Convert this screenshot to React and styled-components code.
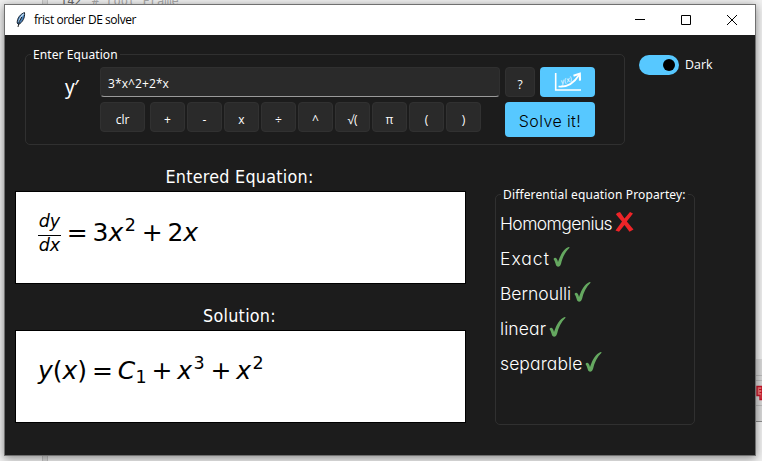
import React from "react";
import styled, { createGlobalStyle } from "styled-components";

const GlobalStyle = createGlobalStyle`
  * { box-sizing: border-box; }
  html, body { margin: 0; padding: 0; overflow: hidden; }
`;

const ui = `"Open Sans", "Noto Sans", sans-serif`;

const Desktop = styled.div`
  position: relative;
  width: 762px;
  height: 461px;
  padding: 4px 6px 5px 4px;
  overflow: hidden;
  background: #f0f0f0;
  font-family: ${ui};
`;

const CodeLine = styled.div`
  position: absolute;
  left: 60px;
  top: -8px;
  font: 12px/18px "DejaVu Sans Mono", monospace;
  color: #a9a9a9;
  white-space: pre;
  span { color: #6a6a6a; margin-right: 3px; }
`;

const Gutter = styled.div`
  position: absolute;
  left: 42px;
  top: 0;
  width: 6px;
  height: 461px;
  background: #dcdcdc;
  border: solid #c4c4c4;
  border-width: 0 1px;
`;

const SidePanel = styled.div`
  position: absolute;
  left: 754px;
  top: 359px;
  width: 8px;
  height: 63px;
  padding-top: 16px;
  background: #d9d9d9;
  border-bottom: 1px solid #8c8c8c;
  svg { display: block; }
`;

const Window = styled.div`
  position: relative;
  display: flex;
  flex-direction: column;
  width: 752px;
  height: 452px;
  border: 1px solid #707070;
  background: #1c1c1c;
  box-shadow: 0 2px 9px rgba(0, 0, 0, 0.45);
`;

const TitleBar = styled.header`
  display: flex;
  align-items: center;
  height: 30px;
  padding-left: 10px;
  background: #fff;
  color: #000;
`;

const Title = styled.h1`
  flex: 1;
  margin: 0 0 0 7px;
  font-size: 12px;
  font-weight: 400;
  line-height: 16px;
  letter-spacing: -0.45px;
`;

const WindowButton = styled.span`
  display: flex;
  align-items: center;
  justify-content: center;
  width: 46px;
  height: 28px;
`;

const Content = styled.main`
  flex: 1;
  padding: 19px 0 0 10px;
`;

const TopRow = styled.div`
  display: flex;
  align-items: flex-start;
  gap: 14px;
  padding-left: 10px;
`;

const Group = styled.section`
  position: relative;
  width: ${(p) => p.$w}px;
  height: ${(p) => p.$h}px;
  border: 1px solid #303030;
  border-radius: 5px;
`;

const Legend = styled.div`
  position: absolute;
  left: 5px;
  top: -9px;
  padding: 0 2px;
  background: #1c1c1c;
  color: #fff;
  font: 12px/18px "Noto Sans", sans-serif;
  letter-spacing: ${(p) => p.$ls || 0}px;
  white-space: nowrap;
`;

const EquationForm = styled.div`
  display: grid;
  grid-template-columns: 74px 400px 95px;
  grid-template-rows: 30px 35px;
  row-gap: 5px;
  padding-top: 12px;
`;

const Prime = styled.label`
  padding: 5px 0 0 39px;
  color: #fff;
  font: 19px/30px "Noto Sans", sans-serif;
  letter-spacing: -0.5px;
`;

const Input = styled.div`
  height: 30px;
  padding-left: 7px;
  background: #2a2a2a;
  border: 1px solid #303030;
  border-bottom-color: #9a9a9a;
  border-radius: 4px;
  color: #fff;
  font: 12px/32px ${ui};
  letter-spacing: 0.1px;
`;

const Actions = styled.div`
  display: flex;
  gap: 5px;
  margin-left: 5px;
`;

const Key = styled.button`
  width: ${(p) => p.$w || 35}px;
  height: 30px;
  padding: 6px 0 0;
  background: #2a2a2a;
  border: 1px solid #313131;
  border-radius: 4px;
  color: #fff;
  font: 12px/20px ${ui};
`;

const PlotButton = styled.button`
  display: flex;
  align-items: center;
  justify-content: center;
  width: 55px;
  height: 30px;
  padding: 0;
  border: 0;
  border-radius: 4px;
  background: #57c8ff;
`;

const Keypad = styled.div`
  grid-column: 2;
  display: flex;
  gap: 2px;
  ${Key}:first-child { margin-right: 3px; }
`;

const SolveButton = styled.button`
  width: 90px;
  height: 35px;
  margin-left: 5px;
  padding: 3px 0 0;
  border: 0;
  border-radius: 4px;
  background: #57c8ff;
  color: #000;
  font: 300 16px/24px Inter, sans-serif;
  letter-spacing: 0.4px;
  white-space: nowrap;
`;

const Toggle = styled.div`
  display: flex;
  align-items: center;
  gap: 6px;
  margin-top: 1px;
  color: #fff;
  font: 12.4px/20px ${ui};
`;

const Track = styled.span`
  display: flex;
  justify-content: flex-end;
  width: 40px;
  height: 20px;
  padding: 4px;
  border-radius: 10px;
  background: #57c8ff;
`;

const Knob = styled.span`
  width: 12px;
  height: 12px;
  border-radius: 50%;
  background: #000;
`;

const ResultRow = styled.div`
  display: flex;
  align-items: flex-start;
  gap: 29px;
  padding-top: 21px;
`;

const Results = styled.div`
  width: 451px;
`;

const Heading = styled.h2`
  margin: 0;
  height: 25px;
  padding-right: 2px;
  color: #fff;
  font: 400 17.8px/21px "DejaVu Sans Condensed", "DejaVu Sans", sans-serif;
  font-stretch: condensed;
  letter-spacing: 0.25px;
  text-align: center;
`;

const Paper = styled.div`
  height: 93px;
  margin-bottom: ${(p) => p.$gap || 0}px;
  padding: ${(p) => p.$top}px 0 0 22px;
  background: #fff;
  border: 1px solid #000;
  color: #000;
  font: 25px/30px "DejaVu Sans", sans-serif;
  display: flex;
  align-items: flex-start;
  i { font-style: oblique; }
`;

const Fraction = styled.span`
  display: inline-flex;
  flex-direction: column;
  width: 23px;
  margin: -6px 1px 0 0;
  font-size: 17.5px;
  line-height: 18px;
  font-style: oblique;
  text-align: center;
  span:first-child { height: 24px; border-bottom: 1px solid #000; }
`;

const Op = styled.span`
  margin: 0 4.8px;
`;

const Script = styled.span`
  font-size: 17.5px;
  margin: ${(p) => (p.$sub ? "6px 0 0 0.4px" : "-8px 1px 0 1.5px")};
`;

const Properties = styled.div`
  padding-top: 28px;
`;

const PropertyList = styled.ul`
  margin: 0;
  padding: 11px 0 0 4px;
  list-style: none;
`;

const Property = styled.li`
  display: flex;
  align-items: center;
  gap: 3px;
  height: 35px;
  color: #fff;
  font: 300 17.5px/35px Inter, sans-serif;
  font-feature-settings: "cv11";
  letter-spacing: ${(p) => p.$ls}px;
  white-space: nowrap;
  svg { margin-bottom: 3px; }
`;

const Check = () => (
  <svg width="18" height="22" viewBox="0 0 18 22">
    <path d="M0.5 13C1.5 11 4 11 5 16C7.5 8 11 3 15.5 1L16.8 1.5C12 6 9.5 11.5 8 18Q7.3 20.5 5.3 20.7Q3.3 20.7 2.5 17.5Q1.8 14.5 0.5 13Z" fill="#65a860" />
  </svg>
);

const Cross = () => (
  <svg width="19" height="22" viewBox="0 0 19 22">
    <path d="M2 2L5 1L9.5 7.5L15 1L18 2.5L11.8 10.5L18.5 18.5L14.5 20.7L9.5 14L4 20.7L0.5 19.5L7 10.5L1 3.5Z" fill="#ee2428" />
  </svg>
);

const Feather = () => (
  <svg width="12" height="16" viewBox="0 0 12 16">
    <path d="M9.5 0.6C5.5 2 2 6 2.2 11L3.5 12.5C7.5 10.5 10.2 5.5 9.5 0.6Z" fill="#4c83bd" stroke="#17222e" strokeWidth="1" />
    <path d="M8.8 1.8Q5 5 3.9 10" fill="none" stroke="#b8d6ef" strokeWidth="1.3" />
    <path d="M6.8 5Q3.8 9 3 15" fill="none" stroke="#111" strokeWidth="0.9" />
  </svg>
);

const PlotIcon = () => (
  <svg width="28" height="20" viewBox="0 0 28 20" fill="none" stroke="#fff">
    <path d="M1.7 1V18H27" strokeWidth="1.6" />
    <path d="M4.5 14.5C13 15.5 20 11 25 3" strokeWidth="1.7" />
    <path d="M19.5 3.7L25.8 1.6L26 8.6" strokeWidth="2.1" />
    <text x="7.5" y="12" transform="rotate(-16 8 12)" fontSize="7" fontWeight="600" fontFamily="Open Sans" fontStyle="italic" fill="#fff" fillOpacity="0.8" stroke="none">y(x)</text>
  </svg>
);

const keys = ["+", "-", "x", "÷", "^", "√(", "π", "(", ")"];
const properties = [
  { name: "Homomgenius", ok: false, ls: -0.6 },
  { name: "Exact", ok: true, ls: 1 },
  { name: "Bernoulli", ok: true, ls: 0 },
  { name: "linear", ok: true, ls: 0.1 },
  { name: "separable", ok: true, ls: 0.1 },
];

export default function App() {
  return (
    <Desktop>
      <GlobalStyle />
      <Gutter />
      <CodeLine><span>142</span> # root Frame</CodeLine>
      <SidePanel>
        <svg width="8" height="32" viewBox="0 0 8 32">
          <path d="M0 .5H8M0 5.5H8M0 30.5H8" stroke="#bdbdbd" />
          <path d="M3 11.5H8V24.5H6V20.5H3Z" fill="#ee7474" stroke="#c81428" strokeWidth="1.4" />
          <path d="M5 14.5H8M5.5 17.5H8" stroke="#c81428" />
        </svg>
      </SidePanel>
      <Window>
        <TitleBar>
          <Feather />
          <Title>frist order DE solver</Title>
          <WindowButton>
            <svg width="10" height="10"><path d="M0 4.5H10" stroke="#000" /></svg>
          </WindowButton>
          <WindowButton>
            <svg width="10" height="10"><path d="M.5 .5H9.5V9.5H.5Z" fill="none" stroke="#000" /></svg>
          </WindowButton>
          <WindowButton>
            <svg width="10" height="10"><path d="M0 0L10 10M10 0L0 10" stroke="#000" /></svg>
          </WindowButton>
        </TitleBar>
        <Content>
          <TopRow>
            <Group $w={600} $h={91}>
              <Legend $ls={0.08}>Enter Equation</Legend>
              <EquationForm>
                <Prime>y′</Prime>
                <Input>3*x^2+2*x</Input>
                <Actions>
                  <Key $w={30}>?</Key>
                  <PlotButton><PlotIcon /></PlotButton>
                </Actions>
                <Keypad>
                  <Key $w={45}>clr</Key>
                  {keys.map((k) => <Key key={k}>{k}</Key>)}
                </Keypad>
                <SolveButton>Solve it!</SolveButton>
              </EquationForm>
            </Group>
            <Toggle>
              <Track><Knob /></Track>
              Dark
            </Toggle>
          </TopRow>
          <ResultRow>
            <Results>
              <Heading>Entered Equation:</Heading>
              <Paper $gap={21} $top={26}>
                <Fraction><span>dy</span><span>dx</span></Fraction>
                <Op>=</Op>3<i>x</i><Script>2</Script><Op>+</Op>2<i>x</i>
              </Paper>
              <Heading>Solution:</Heading>
              <Paper $top={25}>
                <i>y</i>(<i>x</i>)<Op>=</Op><i>C</i><Script $sub>1</Script><Op>+</Op><i>x</i>
                <Script>3</Script><Op>+</Op><i>x</i><Script>2</Script>
              </Paper>
            </Results>
            <Properties>
              <Group $w={200} $h={231}>
                <Legend $ls={0.14}>Differential equation Propartey:</Legend>
                <PropertyList>
                  {properties.map((p) => (
                    <Property key={p.name} $ls={p.ls}>
                      {p.name}
                      {p.ok ? <Check /> : <Cross />}
                    </Property>
                  ))}
                </PropertyList>
              </Group>
            </Properties>
          </ResultRow>
        </Content>
      </Window>
    </Desktop>
  );
}
